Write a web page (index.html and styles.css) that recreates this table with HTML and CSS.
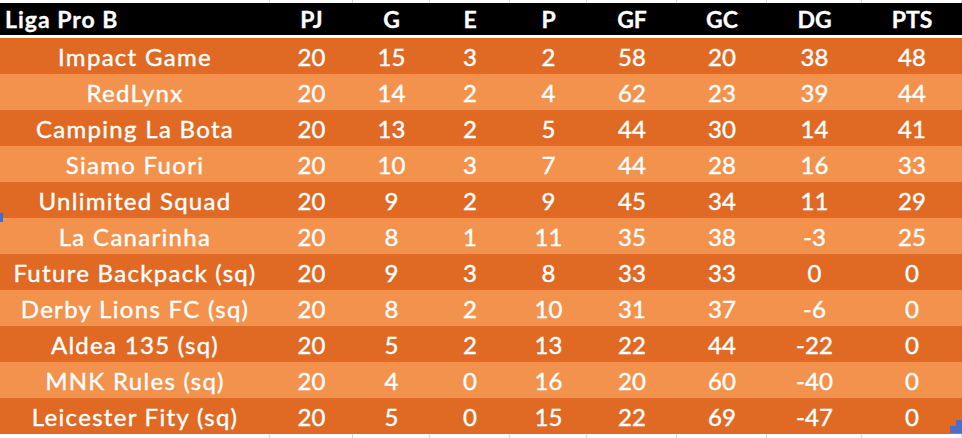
FILE: index.html
```html
<!DOCTYPE html>
<html>
<head>
<meta charset="utf-8">
<link rel="stylesheet" href="styles.css">
</head>
<body>
<div class="sheet">
  <div class="grid-top">
    <span></span><span></span><span></span><span></span><span></span><span></span><span></span><span></span><span></span>
  </div>
  <div class="row head">
    <div class="name">Liga Pro B</div><div>PJ</div><div>G</div><div>E</div><div>P</div><div>GF</div><div>GC</div><div>DG</div><div>PTS</div>
  </div>
  <div class="sep"></div>
  <div class="row dark"><div class="team">Impact Game</div><div>20</div><div>15</div><div>3</div><div>2</div><div>58</div><div>20</div><div>38</div><div>48</div></div>
  <div class="row light"><div class="team">RedLynx</div><div>20</div><div>14</div><div>2</div><div>4</div><div>62</div><div>23</div><div>39</div><div>44</div></div>
  <div class="row dark"><div class="team">Camping La Bota</div><div>20</div><div>13</div><div>2</div><div>5</div><div>44</div><div>30</div><div>14</div><div>41</div></div>
  <div class="row light"><div class="team">Siamo Fuori</div><div>20</div><div>10</div><div>3</div><div>7</div><div>44</div><div>28</div><div>16</div><div>33</div></div>
  <div class="row dark"><div class="team">Unlimited Squad</div><div>20</div><div>9</div><div>2</div><div>9</div><div>45</div><div>34</div><div>11</div><div>29</div></div>
  <div class="row light"><div class="team">La Canarinha</div><div>20</div><div>8</div><div>1</div><div>11</div><div>35</div><div>38</div><div>-3</div><div>25</div></div>
  <div class="row dark"><div class="team">Future Backpack (sq)</div><div>20</div><div>9</div><div>3</div><div>8</div><div>33</div><div>33</div><div>0</div><div>0</div></div>
  <div class="row light"><div class="team">Derby Lions FC (sq)</div><div>20</div><div>8</div><div>2</div><div>10</div><div>31</div><div>37</div><div>-6</div><div>0</div></div>
  <div class="row dark"><div class="team">Aldea 135 (sq)</div><div>20</div><div>5</div><div>2</div><div>13</div><div>22</div><div>44</div><div>-22</div><div>0</div></div>
  <div class="row light"><div class="team">MNK Rules (sq)</div><div>20</div><div>4</div><div>0</div><div>16</div><div>20</div><div>60</div><div>-40</div><div>0</div></div>
  <div class="row dark"><div class="team">Leicester Fity (sq)</div><div>20</div><div>5</div><div>0</div><div>15</div><div>22</div><div>69</div><div>-47</div><div>0</div></div>
  <div class="grid-bottom">
    <span></span><span></span><span></span><span></span><span></span><span></span><span></span><span></span><span></span>
  </div>
  <div class="handle-left"></div>
  <div class="handle-right"><span class="hr-top"></span><span class="hr-bot"></span></div>
</div>
</body>
</html>
```
FILE: styles.css
```css
html, body {
  margin: 0;
  padding: 0;
  background: #ffffff;
}
.sheet {
  position: relative;
  width: 962px;
  height: 438px;
  overflow: hidden;
  font-family: Lato, "Liberation Sans", sans-serif;
  color: #ffffff;
}
.row, .grid-top, .grid-bottom {
  display: grid;
  grid-template-columns: 270px 83px 77px 80px 77px 90px 90px 95px 100px;
}
.grid-top { height: 3px; }
.grid-bottom { height: 4px; }
.grid-top span, .grid-bottom span {
  border-right: 1px solid #d6d6d6;
}
.row {
  height: 36px;
  align-items: center;
  font-size: 24px;
  line-height: 36px;
  -webkit-text-stroke: 0.4px #ffffff;
}
.row > div {
  text-align: center;
  white-space: nowrap;
  padding-top: 1px;
}
.row > .team {
  letter-spacing: 1.3px;
}
.head {
  height: 32px;
  line-height: 32px;
  background: #000000;
  font-weight: 700;
  font-size: 23px;
  -webkit-text-stroke: 0.3px #ffffff;
}
.head > div {
  padding-top: 0;
}
.head .name {
  text-align: left;
  padding-left: 5px;
  letter-spacing: 1px;
}
.sep { height: 3px; background: #ffffff; }
.dark { background: #e06a23; }
.light { background: #f3924c; }
.handle-left {
  position: absolute;
  left: 0;
  top: 213px;
  width: 3px;
  height: 9px;
  background: #3c6fd1;
}
.handle-right {
  position: absolute;
  right: 0;
  top: 420px;
  width: 12px;
  height: 14px;
}
.hr-top {
  position: absolute;
  right: 0;
  top: 0;
  width: 6px;
  height: 6px;
  background: #4a6fc9;
}
.hr-bot {
  position: absolute;
  right: 0;
  top: 6px;
  width: 12px;
  height: 7px;
  background: #4a6fc9;
}
```
